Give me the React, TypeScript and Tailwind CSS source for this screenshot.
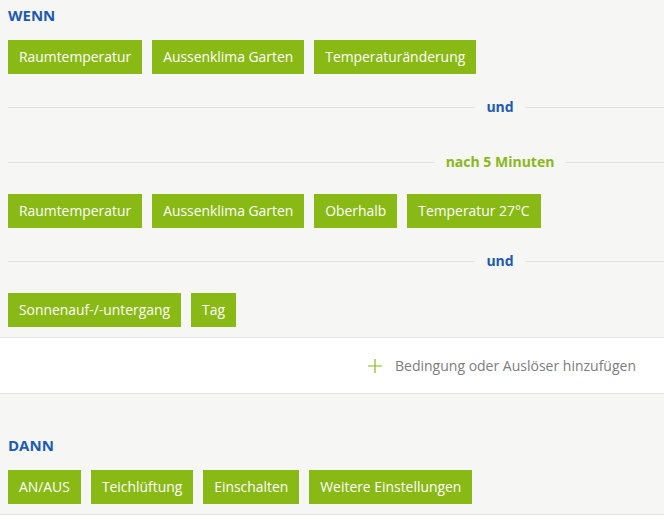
import React from "react";

const font = { fontFamily: '"Open Sans", "Noto Sans", sans-serif' };

function Chip({ label }: { label: string }) {
  return (
    <div className="h-[34px] flex items-center px-[11px] bg-[#89b915] text-white text-[13.9px] leading-[20px]">
      {label}
    </div>
  );
}

function ChipRow({ items }: { items: string[] }) {
  return (
    <div className="flex gap-[10px]">
      {items.map((i) => (
        <Chip key={i} label={i} />
      ))}
    </div>
  );
}

// line with a label centred at x=500 (container is wider than the viewport)
function Divider({ label, green }: { label: string; green?: boolean }) {
  return (
    <div className="flex items-center w-[984px] h-[20px]">
      <div className="flex-1 h-px bg-[#e3e3e1]" />
      <span
        className={
          "px-[11px] text-[14px] leading-[20px] font-bold " +
          (green ? "text-[#8ab81c]" : "text-[#1c5bb0]")
        }
      >
        {label}
      </span>
      <div className="flex-1 h-px bg-[#e3e3e1]" />
    </div>
  );
}

export default function App() {
  return (
    <div className="w-[664px] h-[520px] overflow-hidden bg-white" style={font}>
      {/* WENN */}
      <section className="bg-[#f6f6f4] pl-[8px] pt-[5px] pb-[10px] border-b border-[#e3e3e1]">
        <div className="text-[15px] leading-[20px] font-bold text-[#1c5bb0]">WENN</div>
        <div className="mt-[15px]">
          <ChipRow items={["Raumtemperatur", "Aussenklima Garten", "Temperaturänderung"]} />
        </div>
        <div className="mt-[23px]">
          <Divider label="und" />
        </div>
        <div className="mt-[35px]">
          <Divider label="nach 5 Minuten" green />
        </div>
        <div className="mt-[22px]">
          <ChipRow items={["Raumtemperatur", "Aussenklima Garten", "Oberhalb", "Temperatur 27°C"]} />
        </div>
        <div className="mt-[23px]">
          <Divider label="und" />
        </div>
        <div className="mt-[22px]">
          <ChipRow items={["Sonnenauf-/-untergang", "Tag"]} />
        </div>
      </section>

      {/* add condition */}
      <div className="h-[56px] flex items-center justify-end pr-[28px] bg-white border-b border-[#e3e3e1]">
        <button className="flex items-center gap-[13px] text-[14px] leading-[20px] text-[#7d7d7d]">
          <svg width="14" height="14" viewBox="0 0 14 14" fill="none">
            <path d="M7 0v14M0 7h14" stroke="#8ab81c" strokeWidth="1.2" />
          </svg>
          Bedingung oder Auslöser hinzufügen
        </button>
      </div>

      {/* DANN */}
      <section className="bg-[#f6f6f4] pl-[8px] pt-[41px] pb-[10px] border-b border-[#e3e3e1]">
        <div className="text-[15px] leading-[20px] font-bold text-[#1c5bb0]">DANN</div>
        <div className="mt-[15px]">
          <ChipRow items={["AN/AUS", "Teichlüftung", "Einschalten", "Weitere Einstellungen"]} />
        </div>
      </section>
    </div>
  );
}
